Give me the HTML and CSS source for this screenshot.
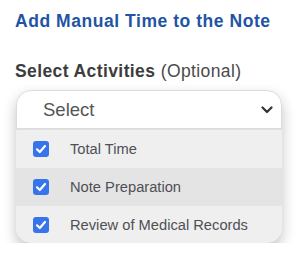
FILE: index.html
```html
<!DOCTYPE html>
<html>
<head>
<meta charset="utf-8">
<link rel="stylesheet" href="styles.css">
</head>
<body>
<div class="page">
  <h1 class="title">Add Manual Time to the Note</h1>
  <div class="label"><b>Select Activities</b> (Optional)</div>
  <div class="select">
    <div class="select-head">
      <span class="placeholder">Select</span>
      <svg class="chev" width="12" height="8" viewBox="0 0 12 8"><path d="M1.5 1.5 L6 6 L10.5 1.5" fill="none" stroke="#333" stroke-width="2.2" stroke-linecap="round" stroke-linejoin="round"/></svg>
    </div>
    <div class="menu">
      <div class="item"><span class="cb"><svg width="16" height="16" viewBox="0 0 16 16"><path d="M4 8.3 L6.8 11 L12 5" fill="none" stroke="#fff" stroke-width="2.2" stroke-linecap="round" stroke-linejoin="round"/></svg></span><span class="txt">Total Time</span></div>
      <div class="item hover"><span class="cb"><svg width="16" height="16" viewBox="0 0 16 16"><path d="M4 8.3 L6.8 11 L12 5" fill="none" stroke="#fff" stroke-width="2.2" stroke-linecap="round" stroke-linejoin="round"/></svg></span><span class="txt">Note Preparation</span></div>
      <div class="item"><span class="cb"><svg width="16" height="16" viewBox="0 0 16 16"><path d="M4 8.3 L6.8 11 L12 5" fill="none" stroke="#fff" stroke-width="2.2" stroke-linecap="round" stroke-linejoin="round"/></svg></span><span class="txt">Review of Medical Records</span></div>
    </div>
  </div>
</div>
</body>
</html>
```
FILE: styles.css
```css
html, body { margin: 0; padding: 0; background: #fff; }
body { font-family: "Liberation Sans", Arial, sans-serif; }
.page { padding: 12px 18px 0 15px; }
.title {
  margin: 0;
  font-size: 17.5px;
  letter-spacing: 0.55px;
  line-height: 18px;
  font-weight: bold;
  color: #1f55a3;
}
.label {
  margin-top: 32px;
  font-size: 17.5px;
  letter-spacing: 0.4px;
  line-height: 18px;
  color: #4a4a4a;
}
.label b { color: #3d3d3d; }
.select {
  margin-top: 10px;
  margin-left: 1px;
  width: 266px;
  border-radius: 15px;
  background: #efefef;
  box-shadow: 0 6px 14px rgba(0,0,0,0.24);
  overflow: hidden;
}
.select-head {
  height: 39px;
  box-sizing: border-box;
  background: #fff;
  border: 1px solid #dcdcdc;
  border-radius: 15px 15px 0 0;
  display: flex;
  align-items: center;
  justify-content: space-between;
  padding: 0 8px 0 26px;
}
.placeholder { font-size: 18.5px; color: #555; }
.chev { margin-top: 1px; }
.menu { border-top: 1px solid #e0e0e0; }
.item {
  height: 38px;
  display: flex;
  align-items: center;
  padding-left: 17px;
}
.item:last-child { height: 37px; }
.item.hover { background: #e4e4e4; }
.cb {
  width: 16px;
  height: 16px;
  border-radius: 3px;
  background: #3773ea;
  display: flex;
}
.txt { margin-left: 21px; font-size: 14.7px; color: #4f4f55; }
```
